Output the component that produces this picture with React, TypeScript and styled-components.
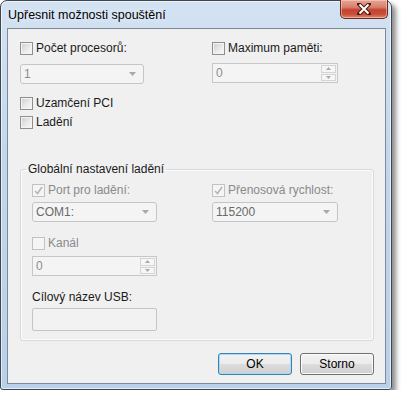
import React from "react";
import styled, { createGlobalStyle } from "styled-components";

const Global = createGlobalStyle`
  html, body { margin: 0; padding: 0; background: #ffffff; }
  body { font-family: "Liberation Sans", Arial, sans-serif; font-size: 12px; color: #1a1a1a; }
  * { box-sizing: border-box; }
`;

const Window = styled.div`
  width: 392px;
  height: 390px;
  border: 1px solid #3e4650;
  border-radius: 7px 7px 3px 3px;
  background: linear-gradient(to bottom, #d3e2f2 0%, #c2d7ee 40%, #b9d0ea 100%);
  box-shadow: 4px 4px 5px rgba(0, 0, 0, 0.45), inset 0 0 0 1px rgba(255, 255, 255, 0.6);
  display: flex;
  flex-direction: column;
  padding: 0 5px 5px 6px;
`;

const TitleBar = styled.div`
  height: 27px;
  display: flex;
  align-items: flex-start;
  justify-content: space-between;
`;

const Title = styled.span`
  margin-top: 6px;
  margin-left: 1px;
  font-size: 12.5px;
  line-height: 16px;
  color: #000;
  text-shadow: 0 0 6px rgba(255, 255, 255, 0.9);
`;

const CloseButton = styled.div`
  width: 48px;
  height: 19px;
  margin-top: -1px;
  margin-right: -2px;
  border: 1px solid #6b2a22;
  border-top: none;
  border-radius: 0 0 5px 5px;
  background: linear-gradient(to bottom, #e8a594 0%, #d7806c 40%, #c4422f 55%, #c8503c 80%, #dd8a6a 100%);
  box-shadow: inset 0 0 0 1px rgba(255, 220, 210, 0.5);
  display: flex;
  align-items: center;
  justify-content: center;
`;

const Client = styled.div`
  flex: 1;
  border: 1px solid #7d8b98;
  background: #f0f0f0;
  display: flex;
  flex-direction: column;
  padding: 12px 11px 0 12px;
`;

const TopGrid = styled.div`
  display: grid;
  grid-template-columns: 192px 1fr;
  row-gap: 8px;
`;

const Column = styled.div`
  display: flex;
  flex-direction: column;
  align-items: flex-start;
`;

const CheckRow = styled.label<{ $disabled?: boolean; $mt?: number }>`
  display: flex;
  align-items: center;
  height: 15px;
  margin-top: ${(p) => p.$mt ?? 0}px;
  color: ${(p) => (p.$disabled ? "#8a8a8a" : "#1a1a1a")};
  line-height: 15px;
  white-space: nowrap;
`;

const Box = styled.span<{ $disabled?: boolean }>`
  width: 13px;
  height: 13px;
  margin-right: 3px;
  border: 1px solid ${(p) => (p.$disabled ? "#c2c2c2" : "#8e8f8f")};
  background: ${(p) =>
    p.$disabled ? "#f5f5f5" : "linear-gradient(135deg, #c9cccf 0%, #e9eaeb 55%, #fafafa 100%)"};
  box-shadow: inset 0 0 0 1px ${(p) => (p.$disabled ? "#f5f5f5" : "#f4f4f4")};
  display: inline-flex;
  align-items: center;
  justify-content: center;
  flex: none;
`;

const Field = styled.div<{ $w: number; $h?: number; $mt?: number }>`
  width: ${(p) => p.$w}px;
  height: ${(p) => p.$h ?? 20}px;
  margin-top: ${(p) => p.$mt ?? 0}px;
  display: flex;
  align-items: stretch;
`;

const Combo = styled.div<{ $dark?: boolean }>`
  flex: 1;
  border: 1px solid #c3c6c9;
  border-radius: 3px;
  background: #f4f4f4;
  display: flex;
  align-items: center;
  justify-content: space-between;
  padding: 0 7px 0 3px;
  color: ${(p) => (p.$dark ? "#6a6a6a" : "#8c8c8c")};
  line-height: 16px;
`;

const SpinButtons = styled.div`
  width: 16px;
  display: flex;
  flex-direction: column;
  gap: 1px;
  margin-left: auto;
  padding: 1px 1px 1px 0;
`;

const SpinBtn = styled.div`
  flex: 1;
  border: 1px solid #d4d4d4;
  background: #f6f6f6;
  display: flex;
  align-items: center;
  justify-content: center;
`;

const SpinWrap = styled.div`
  flex: 1;
  border: 1px solid #c7c7c7;
  background: #f4f4f4;
  display: flex;
  align-items: stretch;
`;

const SpinValue = styled.span`
  align-self: center;
  padding-left: 3px;
  color: #8c8c8c;
`;

const Group = styled.fieldset`
  margin: 32px 0 0 0;
  padding: 6px 10px 9px 11px;
  border: 1px solid #d5dbe0;
  border-radius: 3px;
  box-shadow: inset 0 0 0 1px #fbfbfb;
  min-width: 0;
`;

const Legend = styled.legend`
  margin-left: -6px;
  padding: 0 2px 0 2px;
  line-height: 15px;
  color: #1a1a1a;
`;

const GroupGrid = styled.div`
  display: grid;
  grid-template-columns: 180px 1fr;
  row-gap: 4px;
`;

const PlainLabel = styled.div<{ $mt?: number }>`
  margin-top: ${(p) => p.$mt ?? 0}px;
  line-height: 15px;
  height: 15px;
  color: #1a1a1a;
`;

const TextBox = styled.div`
  width: 125px;
  height: 23px;
  margin-top: 3px;
  border: 1px solid #c5c5c5;
  border-radius: 2px;
  background: #f2f2f2;
`;

const ButtonRow = styled.div`
  display: flex;
  justify-content: flex-end;
  gap: 8px;
  margin-top: 12px;
`;

const Button = styled.div<{ $default?: boolean }>`
  width: 74px;
  height: 22px;
  border: 1px solid ${(p) => (p.$default ? "#3c7fb1" : "#707070")};
  border-radius: 3px;
  background: linear-gradient(to bottom, #f2f2f2 0%, #ebebeb 50%, #dddddd 51%, #cfcfcf 100%);
  box-shadow: inset 0 0 0 1px ${(p) => (p.$default ? "#a6dcf5" : "#fcfcfc")};
  display: flex;
  align-items: center;
  justify-content: center;
  color: #000;
`;

const Arrow = ({ up, color = "#a8a8a8" }: { up?: boolean; color?: string }) => (
  <svg width="7" height="4" viewBox="0 0 7 4">
    <path d={up ? "M0 4 L3.5 0 L7 4 Z" : "M0 0 L7 0 L3.5 4 Z"} fill={color} />
  </svg>
);

const SmallArrow = ({ up }: { up?: boolean }) => (
  <svg width="5" height="3" viewBox="0 0 5 3">
    <path d={up ? "M0 3 L2.5 0 L5 3 Z" : "M0 0 L5 0 L2.5 3 Z"} fill="#a9a9a9" />
  </svg>
);

const Check = () => (
  <svg width="9" height="9" viewBox="0 0 9 9">
    <path d="M1 5 L3.5 7.5 L8 1" fill="none" stroke="#b5b5b5" strokeWidth="1.6" />
  </svg>
);

const CheckBox = ({
  label,
  checked,
  disabled,
  mt,
}: {
  label: string;
  checked?: boolean;
  disabled?: boolean;
  mt?: number;
}) => (
  <CheckRow $disabled={disabled} $mt={mt}>
    <Box $disabled={disabled}>{checked && <Check />}</Box>
    {label}
  </CheckRow>
);

const ComboBox = ({ value, w, dark, mt }: { value: string; w: number; dark?: boolean; mt?: number }) => (
  <Field $w={w} $mt={mt}>
    <Combo $dark={dark}>
      <span>{value}</span>
      <Arrow />
    </Combo>
  </Field>
);

const Spin = ({ value, w, mt }: { value: string; w: number; mt?: number }) => (
  <Field $w={w} $mt={mt}>
    <SpinWrap>
      <SpinValue>{value}</SpinValue>
      <SpinButtons>
        <SpinBtn>
          <SmallArrow up />
        </SpinBtn>
        <SpinBtn>
          <SmallArrow />
        </SpinBtn>
      </SpinButtons>
    </SpinWrap>
  </Field>
);

export default function App() {
  return (
    <>
      <Global />
      <Window>
        <TitleBar>
          <Title>Upřesnit možnosti spouštění</Title>
          <CloseButton>
            <svg width="14" height="12" viewBox="0 0 14 12">
              <path d="M2 1 L12 11 M12 1 L2 11" fill="none" stroke="#4a1a14" strokeWidth="4" strokeLinecap="round" />
              <path d="M2.5 1.5 L11.5 10.5 M11.5 1.5 L2.5 10.5" fill="none" stroke="#ffffff" strokeWidth="2" />
            </svg>
          </CloseButton>
        </TitleBar>
        <Client>
          <TopGrid>
            <Column>
              <CheckBox label="Počet procesorů:" />
              <ComboBox value="1" w={124} mt={8} />
              <CheckBox label="Uzamčení PCI" mt={12} />
              <CheckBox label="Ladění" mt={4} />
            </Column>
            <Column>
              <CheckBox label="Maximum paměti:" />
              <Spin value="0" w={126} mt={7} />
            </Column>
          </TopGrid>
          <Group>
            <Legend>Globální nastavení ladění</Legend>
            <GroupGrid>
              <Column>
                <CheckBox label="Port pro ladění:" checked disabled />
                <ComboBox value="COM1:" w={125} dark mt={4} />
                <CheckBox label="Kanál" disabled mt={14} />
                <Spin value="0" w={125} mt={5} />
                <PlainLabel $mt={14}>Cílový název USB:</PlainLabel>
                <TextBox />
              </Column>
              <Column>
                <CheckBox label="Přenosová rychlost:" checked disabled />
                <ComboBox value="115200" w={126} dark mt={4} />
              </Column>
            </GroupGrid>
          </Group>
          <ButtonRow>
            <Button $default>OK</Button>
            <Button>Storno</Button>
          </ButtonRow>
        </Client>
      </Window>
    </>
  );
}
